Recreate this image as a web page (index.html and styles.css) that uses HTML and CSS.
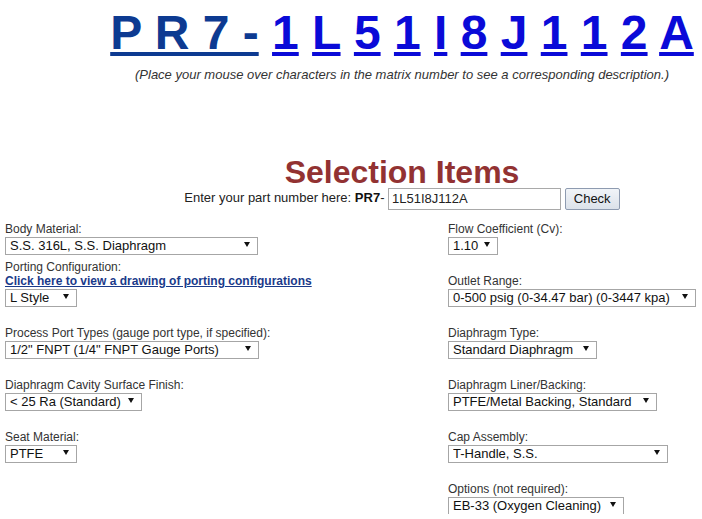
FILE: index.html
```html
<!DOCTYPE html>
<html>
<head>
<meta charset="utf-8">
<title>PR7 Selection</title>
<link rel="stylesheet" href="styles.css">
</head>
<body>
<div class="page">
  <div class="matrix">
    <a class="prefix" href="#">P R 7 -</a>
    <a class="ch" href="#">1</a>
    <a class="ch" href="#">L</a>
    <a class="ch" href="#">5</a>
    <a class="ch" href="#">1</a>
    <a class="ch" href="#">I</a>
    <a class="ch" href="#">8</a>
    <a class="ch" href="#">J</a>
    <a class="ch" href="#">1</a>
    <a class="ch" href="#">1</a>
    <a class="ch" href="#">2</a>
    <a class="ch" href="#">A</a>
  </div>
  <p class="hint">(Place your mouse over characters in the matrix number to see a corresponding description.)</p>

  <h2 class="title">Selection Items</h2>
  <form class="partform">
    Enter your part number here: <b>PR7</b>- <input class="partinput" type="text" value="1L51I8J112A"> <button class="checkbtn" type="button">Check</button>
  </form>

  <div class="fields">
    <div class="field">
      <label class="lbl">Body Material:</label>
      <span class="sel w-body"><select><option>S.S. 316L, S.S. Diaphragm</option></select></span>
    </div>
    <div class="field">
      <label class="lbl">Flow Coefficient (Cv):</label>
      <span class="sel w-flow"><select><option>1.10</option></select></span>
    </div>

    <div class="field">
      <label class="lbl">Porting Configuration:</label>
      <a class="drawlink" href="#">Click here to view a drawing of porting configurations</a>
      <span class="sel w-short"><select><option>L Style</option></select></span>
    </div>
    <div class="field">
      <label class="lbl">Outlet Range:</label>
      <span class="sel w-outlet"><select><option>0-500 psig (0-34.47 bar) (0-3447 kpa)</option></select></span>
    </div>

    <div class="field">
      <label class="lbl">Process Port Types (gauge port type, if specified):</label>
      <span class="sel w-port"><select><option>1/2" FNPT (1/4" FNPT Gauge Ports)</option></select></span>
    </div>
    <div class="field">
      <label class="lbl">Diaphragm Type:</label>
      <span class="sel w-type"><select><option>Standard Diaphragm</option></select></span>
    </div>

    <div class="field">
      <label class="lbl">Diaphragm Cavity Surface Finish:</label>
      <span class="sel w-finish"><select><option>&lt; 25 Ra (Standard)</option></select></span>
    </div>
    <div class="field">
      <label class="lbl">Diaphragm Liner/Backing:</label>
      <span class="sel w-liner"><select><option>PTFE/Metal Backing, Standard</option></select></span>
    </div>

    <div class="field">
      <label class="lbl">Seat Material:</label>
      <span class="sel w-short"><select><option>PTFE</option></select></span>
    </div>
    <div class="field">
      <label class="lbl">Cap Assembly:</label>
      <span class="sel w-cap"><select><option>T-Handle, S.S.</option></select></span>
    </div>

    <div class="field"></div>
    <div class="field">
      <label class="lbl">Options (not required):</label>
      <span class="sel w-options"><select><option>EB-33 (Oxygen Cleaning)</option></select></span>
    </div>
  </div>
</div>
</body>
</html>
```

FILE: styles.css
```css
html, body {
  overflow: hidden;
}
body {
  margin: 5px;
  background: #fff;
  font-family: "Liberation Sans", Arial, sans-serif;
  color: #333;
}
.page {
  width: 794px;
}
.matrix {
  text-align: center;
  font-size: 48px;
  font-weight: bold;
  line-height: 55px;
  white-space: nowrap;
}
.matrix a {
  text-decoration: underline;
}
.matrix .prefix {
  color: #0d3a91;
}
.matrix .ch {
  color: #0a0ad8;
}
.hint {
  margin: 7px 0 0;
  text-align: center;
  font-size: 13px;
  font-style: italic;
  line-height: 15px;
  color: #333;
}
.title {
  margin: 75px 0 0;
  text-align: center;
  font-size: 32px;
  font-weight: bold;
  line-height: 30px;
  color: #923232;
}
.partform {
  margin: 0;
  text-align: center;
  font-size: 13px;
  line-height: 22px;
  color: #222;
}
.partform b {
  color: #111;
}
.partinput {
  box-sizing: border-box;
  width: 173px;
  height: 22px;
  padding: 1px 3px;
  border: 1px solid #a9a9a9;
  font-family: "Liberation Sans", Arial, sans-serif;
  font-size: 13px;
  color: #222;
  vertical-align: middle;
}
.checkbtn {
  box-sizing: border-box;
  width: 55px;
  height: 22px;
  padding: 0;
  border: 1px solid #8e9bb0;
  border-radius: 2px;
  background: linear-gradient(#f1f4f8, #dce2ea);
  font-family: "Liberation Sans", Arial, sans-serif;
  font-size: 13px;
  color: #111;
  vertical-align: middle;
}
.fields {
  margin-top: 12px;
  display: grid;
  grid-template-columns: 443px 1fr;
  grid-template-rows: 32px;
  grid-auto-rows: 52px;
  align-items: end;
}
.field {
  display: flex;
  flex-direction: column;
  align-items: flex-start;
}
.lbl {
  font-size: 12px;
  line-height: 14px;
  color: #333;
}
.drawlink {
  font-size: 12px;
  line-height: 14px;
  font-weight: bold;
  color: #1a3a8a;
  text-decoration: underline;
}
.sel {
  position: relative;
  display: block;
  height: 18px;
}
.sel select {
  -webkit-appearance: none;
  appearance: none;
  box-sizing: border-box;
  width: 100%;
  height: 18px;
  margin: 0;
  padding: 0 0 0 4px;
  border: 1px solid #a6a6a6;
  border-radius: 0;
  background: #fff;
  font-family: "Liberation Sans", Arial, sans-serif;
  font-size: 13px;
  line-height: 16px;
  color: #111;
}
.sel::after {
  content: "";
  position: absolute;
  right: 8px;
  top: 6px;
  border-left: 3px solid transparent;
  border-right: 3px solid transparent;
  border-top: 5px solid #111;
  pointer-events: none;
}
.w-body { width: 253px; }
.w-short { width: 72px; }
.w-port { width: 254px; }
.w-finish { width: 137px; }
.w-flow { width: 50px; }
.w-outlet { width: 248px; }
.w-type { width: 149px; }
.w-liner { width: 209px; }
.w-cap { width: 220px; }
.w-options { width: 176px; }
```
